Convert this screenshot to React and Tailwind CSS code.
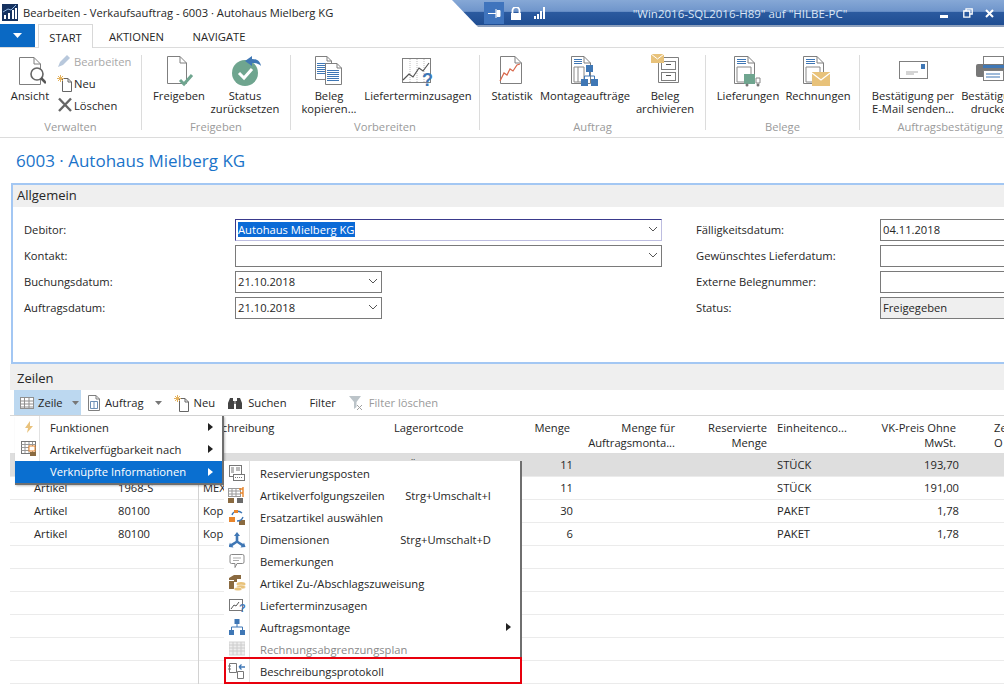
import React from "react";

const BLUE = "#3f77b5";
const GREEN = "#6fa58f";
const GOLD = "#e8c27a";
const ORANGE = "#e8852b";
const GR = "#7f7f7f";

const Page = ({ x = 0, y = 0, w = 24, h = 28, f = 7 }) => (
  <>
    <path d={`M${x + .5} ${y + .5}H${x + w - f}L${x + w - .5} ${y + f}V${y + h - .5}H${x + .5}Z`} fill="#fff" stroke={GR} />
    <path d={`M${x + w - f} ${y + .5}V${y + f}H${x + w - .5}`} fill="none" stroke={GR} />
  </>
);
const Lines = ({ x, y, w, n = 3, c = BLUE, g = 2 }) => (
  <>
    {Array.from({ length: n }).map((_, i) => (
      <rect key={i} x={x} y={y + i * g} width={w} height="1" fill={c} />
    ))}
  </>
);
const S = ({ w = 32, h = 32, children }) => (
  <svg width={w} height={h} viewBox={`0 0 ${w} ${h}`} className="block shrink-0">{children}</svg>
);

const IconAnsicht = () => (
  <S w={32} h={32}>
    <Page x={5} y={1} w={22} h={28} />
    <circle cx="23" cy="18" r="6" fill="#fff" stroke="#666" strokeWidth="1.600" />
    <path d="M27 22l5 5" stroke="#555" strokeWidth="2.600" />
  </S>
);
const IconFreigeben = () => (
  <S w={32} h={32}>
    <Page x={4} y={0} w={20} h={28} />
    <path d="M17 24l4 4 8-9" fill="none" stroke={GREEN} strokeWidth="3" />
  </S>
);
const IconStatus = () => (
  <S w={34} h={32}>
    <circle cx="17" cy="17" r="13" fill={GREEN} />
    <path d="M11 17l5 5 8-9" fill="none" stroke="#fff" strokeWidth="3" />
    <path d="M17 5l7-5v3c5 0 8 2 9 7-2-2-5-3-9-3v3z" fill={BLUE} />
  </S>
);
const IconKopieren = () => (
  <S w={30} h={32}>
    <Page x={1} y={0} w={17} h={24} f={5} />
    <Lines x={3} y={7} w={10} n={6} />
    <Page x={11} y={7} w={17} h={22} f={5} />
    <Lines x={13} y={14} w={12} n={6} />
  </S>
);
const IconZusagen = () => (
  <S w={34} h={32}>
    <rect x="1.500" y="2.500" width="28" height="24" fill="#fff" stroke={GR} />
    <path d="M9 3v23M16 3v23M23 3v23" stroke="#bbb" strokeDasharray="1 1" />
    <path d="M2 24l6-6 4 3 6-9 4 3 6-8" fill="none" stroke="#555" strokeWidth="1.200" />
    <text x="21" y="30" fontSize="18" fontWeight="700" fill={BLUE} fontFamily="Liberation Sans">?</text>
  </S>
);
const IconStatistik = () => (
  <S w={26} h={32}>
    <Page x={1} y={0} w={22} h={28} />
    <path d="M1 25l4-8 3 2 3-6 3 2 4-6 3-1" fill="none" stroke="#d9674a" strokeWidth="1.200" />
  </S>
);
const IconMontage = () => (
  <S w={30} h={32}>
    <Page x={1} y={0} w={20} h={28} />
    <Lines x={4} y={3} w={8} n={3} />
    <path d="M4 11h10v15H4zM8 11v15" fill="none" stroke="#888" />
    <rect x="16" y="9" width="7" height="7" fill={BLUE} />
    <rect x="11" y="23" width="7" height="7" fill={BLUE} />
    <rect x="21" y="23" width="7" height="7" fill={BLUE} />
    <path d="M19.500 16v4M14.500 23v-3h10v3" fill="none" stroke={BLUE} />
  </S>
);
const IconArchiv = () => (
  <div className="-mt-[2px]">
    <S w={28} h={32}>
      <path d="M7.500 3.500h20v25h-20z" fill="#fff" stroke={GR} />
      <rect x="10.500" y="7.500" width="14" height="8" fill="#fff" stroke={GR} />
      <rect x="10.500" y="18.500" width="14" height="8" fill="#fff" stroke={GR} />
      <path d="M15 10.500h5M15 21.500h5" stroke="#555" />
      <rect x="0" y="0" width="13" height="9" fill={GOLD} />
      <path d="M0 0l6.500 5L13 0" fill="none" stroke="#fff" />
    </S>
  </div>
);
const IconLief = () => (
  <S w={30} h={32}>
    <Page x={1} y={0} w={21} h={28} />
    <Lines x={4} y={3} w={9} n={3} />
    <path d="M4 11h14v15H4z" fill="none" stroke="#888" />
    <rect x="11" y="18" width="11" height="10" fill={GREEN} />
    <path d="M23 22h4v5h-4z" fill="#fff" stroke="#888" />
    <circle cx="14" cy="29" r="1.500" fill="#777" />
    <circle cx="25" cy="29" r="1.500" fill="#777" />
  </S>
);
const IconRech = () => (
  <S w={30} h={32}>
    <Page x={0} y={0} w={21} h={28} />
    <Lines x={3} y={3} w={9} n={3} />
    <path d="M3 11h14v15H3z" fill="none" stroke="#888" />
    <rect x="9" y="16" width="18" height="14" fill={GOLD} />
    <path d="M9 17l9 7 9-7" fill="none" stroke="#fff" strokeWidth="1.200" />
  </S>
);
const IconMail = () => (
  <div className="ml-[2px] mt-[4px]">
    <S w={30} h={20}>
      <rect x=".5" y="1.500" width="28" height="17" fill="#fff" stroke={GR} />
      <rect x="22" y="4" width="4" height="5" fill={BLUE} />
      <path d="M7 12h12M7 14h8" stroke="#aaa" />
    </S>
  </div>
);
const IconDruck = () => (
  <S w={32} h={28}>
    <rect x="7.500" y="0.500" width="20" height="8" fill="#fff" stroke={GR} />
    <rect x="0" y="8" width="32" height="13" rx="2" fill="#777" />
    <rect x="7" y="9" width="25" height="3" fill={BLUE} />
    <rect x="7.500" y="14.500" width="20" height="10" fill="#fff" stroke={GR} />
    <path d="M10 18h14M10 21h14" stroke={BLUE} />
  </S>
);
const SPencil = () => (
  <S w={14} h={14}><path d="M1 13l2-5 7-7 3 3-7 7z" fill="#b8c8dc" /></S>
);
const SNeu = () => (
  <S w={16} h={18}>
    <path d="M5.500 4.500H11L14.500 8v9.500h-9z" fill="#fff" stroke="#666" />
    <path d="M11 4.500V8h3.500" fill="none" stroke="#666" />
    <path d="M3.500 1v7M0 4.500h7M1 2l5 5M6 2L1 7" stroke="#e4b25e" />
  </S>
);
const SX = () => (
  <S w={16} h={16}><path d="M2 1.500l12 12.500M14 1.500L2 14" stroke="#666" strokeWidth="2.400" /></S>
);
const Grid = ({ c = "#8f8f8f" }) => (
  <S w={14} h={14}>
    <rect x=".5" y="1.500" width="13" height="11" fill="#fff" stroke={c} />
    <path d="M.5 5h13M.5 8h13M.5 11h13M4.500 2v10M9 2v10" stroke={c} />
  </S>
);
const TDoc = () => (
  <S w={12} h={16}>
    <Page x={0} y={0} w={12} h={16} f={4} />
    <path d="M2.500 6.500h7v7h-7zM6 6.500v7" fill="none" stroke="#6d8fb5" />
  </S>
);
const Bino = () => (
  <S w={16} h={14}>
    <path d="M1 13V7l2-5h3v3h4V2h3l2 5v6h-6V8H7v5z" fill="#444" />
    <rect x="7" y="5" width="2" height="3" fill="#888" />
  </S>
);
const FilterX = () => (
  <S w={16} h={16}>
    <path d="M1 1h12L8.500 7v5L6 14V7z" fill="#bcc4c9" />
    <path d="M9 10l5 5M14 10l-5 5" stroke="#a0a0a0" />
  </S>
);
const Bolt = () => (
  <S w={10} h={12}><path d="M6 0L1 7h3L3 12l6-7H6z" fill="#e9c27c" /></S>
);
const Cal = ({ o = ORANGE }) => (
  <S w={16} h={16}>
    <rect x=".5" y=".5" width="14" height="12" fill="#fff" stroke="#777" />
    <path d="M.5 3.500h14M.5 6.500h14M.5 9.500h14M4 1v11M8 1v11M11.500 1v11" stroke="#999" />
    <rect x="8" y="5" width="6" height="5" fill="#fff" stroke={o} />
    <rect x="9" y="11" width="6" height="4" fill="#8a6a40" />
  </S>
);
const I1 = () => (
  <S w={16} h={17}>
    <rect x=".5" y=".5" width="12" height="11" fill="#fff" stroke="#777" />
    <path d="M2 3h3M7 3h4M2 5h3M7 5h4M2 7h3" stroke="#777" />
    <rect x="4.500" y="9.500" width="11" height="6" fill="#fff" stroke="#777" />
    <path d="M6 12.500h8" stroke="#777" strokeDasharray="1 1" />
  </S>
);
const I2 = () => (
  <S w={18} h={17}>
    <rect x=".5" y="1.500" width="12" height="8" fill="#fff" stroke="#999" />
    <path d="M.5 4h12M.5 7h12M4 2v8M8 2v8" stroke="#999" />
    <path d="M15 0v10M11 2h4M12 6h3" stroke={ORANGE} strokeWidth="1.400" fill="none" />
    <rect x="0" y="11" width="6" height="5" fill="#8a6a40" />
    <rect x="9" y="11" width="6" height="5" fill="#6b6b6b" />
  </S>
);
const I3 = () => (
  <S w={17} h={17}>
    <rect x="0" y="8" width="6" height="5" fill={ORANGE} />
    <rect x="10" y="11" width="6" height="5" fill="#8a6a40" />
    <path d="M3 6c1-4 7-5 10-2M14 8c-1 3-3 4-6 4" fill="none" stroke={BLUE} strokeWidth="1.300" />
    <rect x="5" y="1" width="4" height="3" fill={ORANGE} />
  </S>
);
const I4 = () => (
  <S w={17} h={17}>
    <path d="M8 1l3 4H9.300v5l5 3 .7-1.500 1.500 4.500-5 .5 1-1.500-4.500-3-4.500 3 1 1.500-5-.5 1.500-4.500.7 1.500 5-3V5H5z" fill={BLUE} />
  </S>
);
const I5 = () => (
  <S w={16} h={16}>
    <path d="M2.500 1.500h11a1.500 1.500 0 011.500 1.500v6a1.500 1.500 0 01-1.500 1.500H8l-2 4v-4H2.500A1.500 1.500 0 011 9V3a1.500 1.500 0 011.500-1.500z" fill="#fff" stroke="#888" />
    <path d="M4 5h8M4 7.500h6" stroke="#aaa" />
  </S>
);
const I6 = () => (
  <S w={17} h={16}>
    <path d="M0 3l5-3h7v4H8v3H5V5H0z" fill="#8a6a40" />
    <rect x="0" y="6" width="5" height="8" fill="#8a6a40" />
    <ellipse cx="12" cy="9" rx="4.500" ry="2" fill={GOLD} />
    <ellipse cx="12" cy="12" rx="4.500" ry="2" fill={GOLD} stroke="#fff" strokeWidth=".5" />
    <ellipse cx="9" cy="14" rx="4" ry="1.800" fill={GOLD} stroke="#fff" strokeWidth=".5" />
  </S>
);
const I7 = () => (
  <S w={17} h={15}>
    <rect x=".5" y="1.500" width="13" height="11" fill="#fff" stroke="#777" />
    <path d="M2 11l3-4 2 1 3-4" fill="none" stroke="#555" />
    <text x="10" y="14" fontSize="11" fontWeight="700" fill={BLUE} fontFamily="Liberation Sans">?</text>
  </S>
);
const I8 = () => (
  <S w={16} h={16}>
    <rect x="5.500" y="0" width="5" height="5" fill={BLUE} />
    <rect x="0" y="11" width="5" height="5" fill={BLUE} />
    <rect x="11" y="11" width="5" height="5" fill={BLUE} />
    <path d="M8 5v3M2.500 11V8h11v3" fill="none" stroke={BLUE} />
  </S>
);
const I9 = () => (
  <S w={16} h={16}>
    <rect x="0" y="1" width="16" height="13" fill="#ededed" stroke="#d4d4d4" />
    <path d="M0 4h16M0 7h16M0 10h16M4 1v13M8 1v13M12 1v13" stroke="#ccc" />
  </S>
);
const I10 = () => (
  <S w={18} h={18}>
    <path d="M1.500 1.500h7v9h-7z" fill="#fff" stroke="#777" />
    <path d="M0 4h3M0 7h3" stroke="#777" />
    <path d="M9.500 9.500h6v7h-6z" fill="#fff" stroke="#777" />
    <path d="M11 5h6M11 5l2.500-2.500M11 5l2.500 2.500" fill="none" stroke={BLUE} strokeWidth="1.300" />
  </S>
);
const Tri = ({ c = "#222" }) => (
  <svg width="5" height="8" viewBox="0 0 5 8" className="block"><path d="M0 0l5 4-5 4z" fill={c} /></svg>
);
const Down = ({ c = "#777" }) => (
  <svg width="7" height="4" viewBox="0 0 7 4" className="block"><path d="M0 0h7L3.500 4z" fill={c} /></svg>
);
const Chev = () => (
  <svg width="10" height="6" viewBox="0 0 10 6" className="block"><path d="M1 1l4 4 4-4" fill="none" stroke="#555" /></svg>
);

const Big = ({ icon, l1, l2, w }) => (
  <div className={`flex flex-col items-center ${w}`}>
    <div className="h-[40px] flex items-start justify-center pt-[8px]">{icon}</div>
    <div className="text-center leading-[13px] whitespace-nowrap pt-[1px]">{l1}<br />{l2}</div>
  </div>
);
const Group = ({ w, label, pad, children }) => (
  <div className={`flex flex-col shrink-0 ${w}`}>
    <div className={`flex h-[72px] ${pad}`}>{children}</div>
    <div className="text-center text-[#9a9a9a] leading-[14px]">{label}</div>
  </div>
);
const Sep = () => <div className="w-px shrink-0 bg-[#dcdcdc] my-[7px]" />;

const Field = ({ label, children }) => (
  <div className="flex items-center h-[22px]">
    <div className="w-[211px] shrink-0 pb-[2px]">{label}</div>
    {children}
  </div>
);
const Input = ({ w, children, extra = "" }) => (
  <div className={`h-[22px] pb-[2px] border border-[#7a7a7a] flex items-center justify-between pl-[2px] pr-[3px] ${w} ${extra}`}>
    {children}
  </div>
);

const Row = ({ a, b, c, d, e, h, i, bg = "" }) => (
  <div className={`flex h-[23px] items-center pb-[2px] border-b border-[#ebebeb] ${bg}`}>
    <div className="w-[108px] pl-[24px] shrink-0">{a}</div>
    <div className="w-[80px] shrink-0">{b}</div>
    <div className="w-px h-[23px] -mb-[2px] bg-[#d2d2d2] shrink-0" />
    <div className="w-[195px] pl-[4px] shrink-0 whitespace-nowrap overflow-hidden">{c}</div>
    <div className="w-[126px] shrink-0">{d}</div>
    <div className="w-[53px] text-right shrink-0">{e}</div>
    <div className="w-[195px] shrink-0" />
    <div className="w-[106px] pl-[9px] shrink-0">{h}</div>
    <div className="w-[85px] text-right shrink-0">{i}</div>
  </div>
);

const subItems = [
  [<I1 />, "Reservierungsposten"],
  [<I2 />, "Artikelverfolgungszeilen", "Strg+Umschalt+I"],
  [<I3 />, "Ersatzartikel auswählen"],
  [<I4 />, "Dimensionen", "Strg+Umschalt+D"],
  [<I5 />, "Bemerkungen"],
  [<I6 />, "Artikel Zu-/Abschlagszuweisung"],
  [<I7 />, "Lieferterminzusagen"],
  [<I8 />, "Auftragsmontage", null, true],
  [<I9 />, "Rechnungsabgrenzungsplan", null, false, true],
  [<I10 />, "Beschreibungsprotokoll"],
];

export default function App() {
  return (
    <div className="relative w-[1004px] h-[684px] overflow-hidden bg-white font-['Open_Sans',sans-serif] text-[11.2px] text-[#262626] leading-[15px]">
      {/* Title bar */}
      <div className="h-[24px] flex items-center pl-[2px] gap-[5px]">
        <svg width="16" height="17" viewBox="0 0 16 17" className="block">
          <rect width="16" height="17" fill="#16325f" />
          <path d="M2 15v-4h2v4zM6 15V9h2v6zM10 15V6h2v9zM13 15V4h2v11z" fill="#fff" />
          <path d="M1 8l5-3 3 1 5-5" fill="none" stroke="#8fb4e0" />
        </svg>
        <span className="whitespace-nowrap">Bearbeiten - Verkaufsauftrag - 6003 · Autohaus Mielberg KG</span>
      </div>

      {/* Tabs */}
      <div className="flex h-[24px] relative z-10 -mb-px">
        <div className="w-[35px] h-[23px] bg-[#0a69c4] flex items-center justify-center">
          <svg width="9" height="5" viewBox="0 0 9 5" className="block"><path d="M0 0h9L4.500 5z" fill="#fff" /></svg>
        </div>
        <div className="ml-[3px] w-[55px] h-[24px] pt-[2px] bg-white border border-b-0 border-[#d8d8d8] flex items-center justify-center">START</div>
        <div className="ml-[14px] w-[59px] text-center leading-[26px]">AKTIONEN</div>
        <div className="ml-[25px] w-[56px] text-center leading-[26px]">NAVIGATE</div>
      </div>

      {/* Ribbon */}
      <div className="h-[91px] border-y border-[#dcdcdc] flex overflow-hidden">
        <Group w="w-[141px]" label="Verwalten" pad="pl-[9px]">
          <Big w="w-[42px]" icon={<IconAnsicht />} l1="Ansicht" />
          <div className="pl-[6px] pt-[2px] flex flex-col">
            <div className="h-[22px] flex items-center gap-[3px] text-[#a8a8a8]"><SPencil />Bearbeiten</div>
            <div className="h-[22px] flex items-center gap-[1px]"><SNeu />Neu</div>
            <div className="h-[22px] flex items-center gap-[1px]"><SX />Löschen</div>
          </div>
        </Group>
        <Sep />
        <Group w="w-[148px]" label="Freigeben" pad="pl-[9px]">
          <Big w="w-[56px]" icon={<IconFreigeben />} l1="Freigeben" />
          <Big w="w-[76px]" icon={<IconStatus />} l1="Status" l2="zurücksetzen" />
        </Group>
        <Sep />
        <Group w="w-[188px]" label="Vorbereiten" pad="pl-[6px]">
          <Big w="w-[64px]" icon={<IconKopieren />} l1="Beleg" l2="kopieren..." />
          <Big w="w-[114px]" icon={<IconZusagen />} l1="Lieferterminzusagen" />
        </Group>
        <Sep />
        <Group w="w-[225px]" label="Auftrag" pad="pl-[10px]">
          <Big w="w-[44px]" icon={<IconStatistik />} l1="Statistik" />
          <Big w="w-[102px]" icon={<IconMontage />} l1="Montageaufträge" />
          <Big w="w-[58px]" icon={<IconArchiv />} l1="Beleg" l2="archivieren" />
        </Group>
        <Sep />
        <Group w="w-[153px]" label="Belege" pad="pl-[8px]">
          <Big w="w-[68px]" icon={<IconLief />} l1="Lieferungen" />
          <Big w="w-[72px]" icon={<IconRech />} l1="Rechnungen" />
        </Group>
        <Sep />
        <Group w="w-[180px]" label="Auftragsbestätigung" pad="pl-[9px]">
          <Big w="w-[88px]" icon={<IconMail />} l1="Bestätigung per" l2="E-Mail senden..." />
          <Big w="w-[70px]" icon={<IconDruck />} l1="Bestätigung" l2="drucken" />
        </Group>
      </div>

      {/* Page title */}
      <div className="h-[45px] pl-[16px] pt-[11px] text-[17px] leading-[24px] text-[#1a73c9] whitespace-nowrap">6003 · Autohaus Mielberg KG</div>

      {/* Allgemein */}
      <div className="ml-[11px] w-[1100px] h-[181px] border-2 border-[#a3c7f3] border-r-0">
        <div className="h-[22px] bg-[#efefef] pl-[4px] text-[13px] leading-[21px]">Allgemein</div>
        <div className="flex pl-[11px] pt-[12px]">
          <div className="w-[672px] shrink-0 flex flex-col gap-[4px]">
            <Field label="Debitor:">
              <Input w="w-[427px]" extra="border-[#bdbde0] border-t-[#3a3a8c] border-l-[#3a3a8c]">
                <span className="bg-[#0a6ad6] text-white">Autohaus Mielberg KG</span><Chev />
              </Input>
            </Field>
            <Field label="Kontakt:"><Input w="w-[427px]"><span /><Chev /></Input></Field>
            <Field label="Buchungsdatum:"><Input w="w-[147px]"><span>21.10.2018</span><Chev /></Input></Field>
            <Field label="Auftragsdatum:"><Input w="w-[147px]"><span>21.10.2018</span><Chev /></Input></Field>
          </div>
          <div className="flex flex-col gap-[4px] [&>div>div:first-child]:w-[184px]">
            <Field label="Fälligkeitsdatum:"><Input w="w-[200px]"><span>04.11.2018</span></Input></Field>
            <Field label="Gewünschtes Lieferdatum:"><Input w="w-[200px]" /></Field>
            <Field label="Externe Belegnummer:"><Input w="w-[200px]" /></Field>
            <Field label="Status:"><Input w="w-[200px]" extra="bg-[#efefef]"><span>Freigegeben</span></Input></Field>
          </div>
        </div>
      </div>

      {/* Zeilen */}
      <div className="ml-[10px] h-[26px] bg-[#efefef] pl-[7px] text-[13px] leading-[28px]">Zeilen</div>

      {/* Toolbar */}
      <div className="ml-[14px] h-[25px] flex items-center whitespace-nowrap">
        <div className="w-[67px] h-[25px] bg-[#bcd8f0] flex items-center pl-[6px] gap-[4px]">
          <Grid /><span>Zeile</span><span className="ml-[5px]"><Down /></span>
        </div>
        <div className="ml-[7px]"><TDoc /></div>
        <span className="ml-[5px]">Auftrag</span>
        <span className="ml-[11px]"><Down /></span>
        <span className="ml-[12px]"><SNeu /></span>
        <span className="ml-[4px]">Neu</span>
        <span className="ml-[12px]"><Bino /></span>
        <span className="ml-[5px]">Suchen</span>
        <span className="ml-[23px]">Filter</span>
        <span className="ml-[12px]"><FilterX /></span>
        <span className="ml-[5px] text-[#9a9a9a]">Filter löschen</span>
      </div>

      {/* Table */}
      <div className="ml-[10px] border-t border-[#d6d6d6]">
        <div className="flex h-[38px] pt-[4px] border-b border-[#dddddd] whitespace-nowrap">
          <div className="w-[189px] shrink-0" />
          <div className="w-[195px] shrink-0 pl-[4px]">Beschreibung</div>
          <div className="w-[126px] shrink-0">Lagerortcode</div>
          <div className="w-[50px] shrink-0 text-right">Menge</div>
          <div className="w-[105px] shrink-0 text-right">Menge für<br />Auftragsmonta...</div>
          <div className="w-[92px] shrink-0 text-right">Reservierte<br />Menge</div>
          <div className="w-[106px] shrink-0 pl-[10px]">Einheitenco...</div>
          <div className="w-[83px] shrink-0 text-right">VK-Preis Ohne<br />MwSt.</div>
          <div className="ml-[38px]">Ze<br />O</div>
        </div>
        <Row c={<span className="ml-[24px]">VS-Bremsen Melden</span>} d="GRÜN" e="11" h="STÜCK" i="193,70" bg="bg-[#dedede]" />
        <Row a="Artikel" b="1968-S" c="MEX" e="11" h="STÜCK" i="191,00" />
        <Row a="Artikel" b="80100" c="Kop" e="30" h="PAKET" i="1,78" />
        <Row a="Artikel" b="80100" c="Kop" e="6" h="PAKET" i="1,78" />
        <Row /><Row /><Row /><Row /><Row /><Row />
      </div>

      {/* Zeile menu */}
      <div className="absolute left-[15px] top-[416px] w-[209px] h-[69px] bg-white border-r-2 border-b-2 border-[#6f6f6f] shadow-[1px_1px_2px_rgba(0,0,0,0.25)]">
        <div className="absolute left-[24px] top-0 bottom-[22px] w-px bg-[#e2e2e2]" />
        {[
          [<Bolt />, "Funktionen"],
          [<Cal />, "Artikelverfügbarkeit nach"],
          [null, "Verknüpfte Informationen"],
        ].map(([ic, t], i) => (
          <div key={t} className={`flex items-center h-[22px] ${i === 2 ? "bg-[#0a6fd0] text-white mt-[1px] pb-[1px]" : ""}`}>
            <div className="w-[24px] flex justify-center shrink-0 pl-[3px]">{ic}</div>
            <div className="pl-[11px] flex-1">{t}</div>
            <div className="pr-[9px]"><Tri c={i === 2 ? "#fff" : "#222"} /></div>
          </div>
        ))}
      </div>

      {/* Submenu */}
      <div className="absolute left-[224px] top-[461px] w-[298px] h-[223px] bg-white border-r-2 border-[#6f6f6f] pt-[1px]">
        <div className="absolute left-[25px] top-0 bottom-0 w-px bg-[#e2e2e2]" />
        {subItems.map(([ic, t, sc, arrow, dis]) => (
          <div key={t} className={`flex items-center h-[22px] whitespace-nowrap ${dis ? "text-[#8a8a8a]" : ""}`}>
            <div className="w-[26px] flex justify-center shrink-0">{ic}</div>
            <div className="pl-[10px] flex-1">{t}</div>
            {sc && <div className="pr-[29px]">{sc}</div>}
            {arrow && <div className="pr-[9px]"><Tri /></div>}
          </div>
        ))}
      </div>
      {/* red highlight */}
      <div className="absolute left-[224px] top-[657px] w-[298px] h-[27px] border-2 border-[#e8000d]" />

      {/* Remote desktop bar */}
      <div className="absolute left-[452px] top-0 w-[552px] h-[27px] [clip-path:polygon(0_0,100%_0,100%_100%,26px_100%)] bg-[linear-gradient(#86a8d6_0%,#6f95cb_42%,#2b5a9f_46%,#1f4d92_92%,#8ea0bc_93%)] text-white">
        <div className="flex items-center h-[26px] whitespace-nowrap">
          <div className="ml-[32px] w-[20px] h-[22px] bg-[#3f74bd] flex items-center justify-center">
            <svg width="13" height="9" viewBox="0 0 13 9" className="block"><path d="M0 4.500h8M8 0v9M9 1.500h3v6H9z" fill="#fff" stroke="#fff" /></svg>
          </div>
          <svg width="12" height="13" viewBox="0 0 12 13" className="block ml-[6px]"><path d="M2.500 6V3.500a3.500 3.500 0 017 0V6" fill="none" stroke="#fff" strokeWidth="1.800" /><rect x="1" y="6" width="10" height="7" fill="#fff" /></svg>
          <svg width="12" height="12" viewBox="0 0 12 12" className="block ml-[12px]"><path d="M0 9h2v3H0zM3 7h2v5H3zM6 4h2v8H6zM9 0h2v12H9z" fill="#fff" /></svg>
          <span className="ml-[86px] w-[216px] text-center text-[11.5px] text-[#dbe6f5]">"Win2016-SQL2016-H89" auf "HILBE-PC"</span>
          <svg width="8" height="4" viewBox="0 0 8 4" className="block ml-[92px] mt-[8px]"><rect width="8" height="3" fill="#fff" /></svg>
          <svg width="10" height="10" viewBox="0 0 10 10" className="block ml-[15px]"><path d="M3 2.500V.8h6.200V6H7M.8 3h6v6.200H.8z" fill="none" stroke="#fff" strokeWidth="1.300" /></svg>
          <svg width="9" height="9" viewBox="0 0 9 9" className="block ml-[12px]"><path d="M1 1l7 7M8 1L1 8" stroke="#fff" strokeWidth="2" /></svg>
        </div>
      </div>
    </div>
  );
}
